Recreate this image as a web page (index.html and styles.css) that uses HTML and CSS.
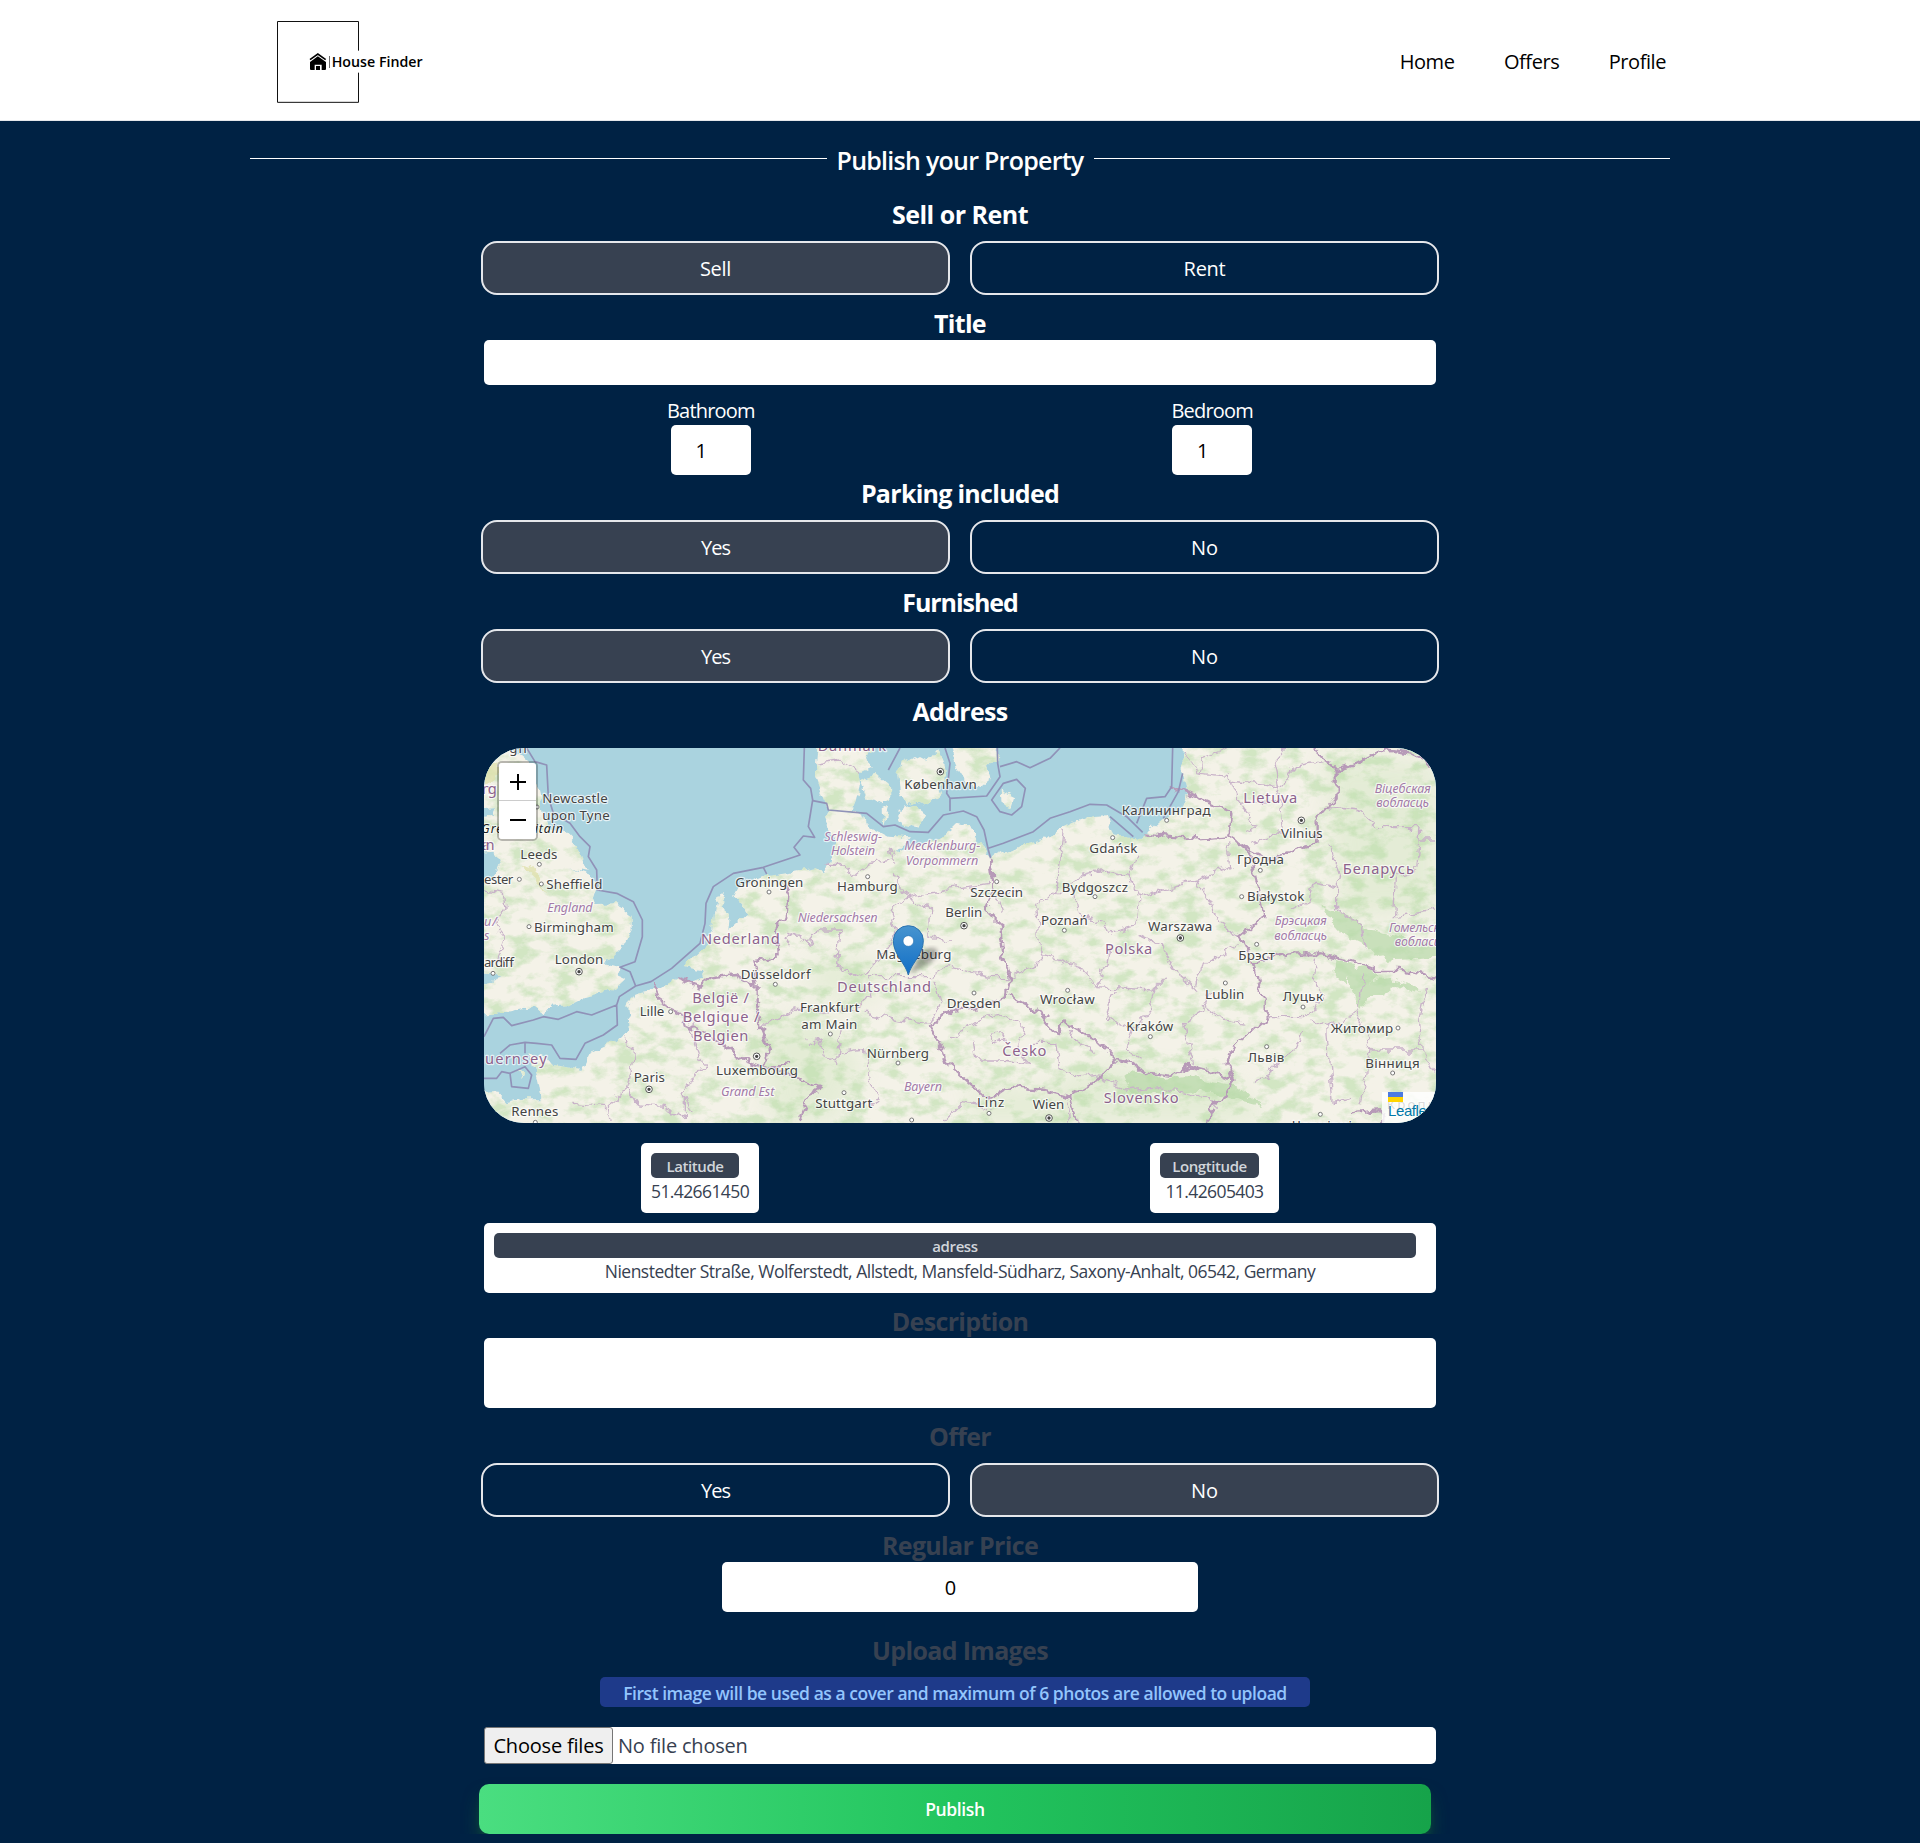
FILE: index.html
```html
<!DOCTYPE html>
<html lang="en">
<head>
<meta charset="utf-8">
<title>House Finder</title>
<link rel="stylesheet" href="styles.css">
</head>
<body>
<header class="site-header">
  <div class="header-inner">
    <svg class="logo" viewBox="0 0 510 315" role="img" aria-label="House Finder">
      <path d="M265.500 122V34.500H22.500V277H265.500V188" fill="none" stroke="#111" stroke-width="3"/>
      <path d="M120 149L143.500 132L167 149" fill="none" stroke="#000" stroke-width="5"/>
      <path fill-rule="evenodd" d="M120 156L143.500 139L168 156V177Q168 180 165 180H155V164H134V180H123Q120 180 120 177ZM138 168H150V180H138Z" fill="#000"/>
      <path d="M178.500 138V174" stroke="#222" stroke-width="2"/>
      <text class="logo-text" x="185" y="172" textLength="273" lengthAdjust="spacingAndGlyphs">House Finder</text>
    </svg>
    <nav class="nav"><a>Home</a><a>Offers</a><a>Profile</a></nav>
  </div>
</header>
<main class="page">
  <h1 class="page-title"><span>Publish your Property</span></h1>
  <form class="form">
    <h2 class="heading sell-or-rent">Sell or Rent</h2>
    <div class="choices"><button type="button" class="choice on">Sell</button><button type="button" class="choice">Rent</button></div>
    <h2 class="heading">Title</h2>
    <div class="field title-field"></div>
    <div class="rooms">
      <label class="room"><span>Bathroom</span><span class="field number">1</span></label>
      <label class="room"><span>Bedroom</span><span class="field number">1</span></label>
    </div>
    <h2 class="heading tight">Parking included</h2>
    <div class="choices"><button type="button" class="choice on yes">Yes</button><button type="button" class="choice no">No</button></div>
    <h2 class="heading furnished">Furnished</h2>
    <div class="choices"><button type="button" class="choice on yes">Yes</button><button type="button" class="choice no">No</button></div>
    <h2 class="heading">Address</h2>
    <div class="map">
      <svg class="map-canvas" viewBox="42 54 2856 1125">
        <defs>
          <filter id="terrain" x="0" y="0" width="2940" height="1200" filterUnits="userSpaceOnUse" color-interpolation-filters="sRGB">
            <feTurbulence type="fractalNoise" baseFrequency="0.03" numOctaves="3" seed="4" result="jag"/>
            <feDisplacementMap in="SourceGraphic" in2="jag" scale="30" xChannelSelector="R" yChannelSelector="G" result="land"/>
            <feTurbulence type="fractalNoise" baseFrequency="0.016 0.026" numOctaves="5" seed="11"/>
            <feColorMatrix values="0 0 0 0 .74  0 0 0 0 .87  0 0 0 0 .68  0 3.600 0 0 -1.600" result="wood"/>
            <feComposite in="wood" in2="land" operator="in" result="forest"/>
            <feComponentTransfer in="forest" result="soft"><feFuncA type="linear" slope=".62"/></feComponentTransfer>
            <feMerge><feMergeNode in="land"/><feMergeNode in="soft"/></feMerge>
          </filter>
          <filter id="jagged" x="0" y="0" width="2940" height="1200" filterUnits="userSpaceOnUse" color-interpolation-filters="sRGB">
            <feTurbulence type="fractalNoise" baseFrequency="0.03" numOctaves="3" seed="4"/>
            <feDisplacementMap in="SourceGraphic" scale="36" xChannelSelector="R" yChannelSelector="G"/>
          </filter>
          <filter id="blur"><feGaussianBlur stdDeviation="6"/></filter>
          <filter id="haze" x="-20%" y="-20%" width="140%" height="140%"><feGaussianBlur stdDeviation="35"/></filter>
          <linearGradient id="pin" x1="0" y1="0" x2="0" y2="1"><stop offset="0" stop-color="#4794cf"/><stop offset="1" stop-color="#126fc6"/></linearGradient>
        </defs>
        <path fill="#aad3df" d="M0 0H2940V1200H0z"/>
        <g filter="url(#terrain)" fill="#f4f2e8">
          <path d="M20 54H125L180 100L205 180L230 290L275 300L320 345L330 380L350 425L300 415L345 430L380 470L370 500L385 522L440 520L485 555V600L455 655L420 690L400 700L450 712L440 735L462 745L425 780L350 800L300 825L240 830L225 850L195 828L110 845L20 852V770L75 755L90 735L20 728V450L75 440L92 400L70 365L20 370V262L78 250L75 235L20 238z"/>
          <path d="M20 1085L75 1080L110 1120L165 1105L215 1105L205 1050L190 1000L175 970L235 985L250 1005L340 1020L365 965L440 930L480 900L472 830L490 795L560 780L620 745L660 760L700 745L690 720L640 710L690 665L730 600L735 550L745 495L765 490L750 530L780 555L775 600L830 550L790 500L805 470L880 440L950 430L1040 415L1065 430L1075 395L1095 330L1065 260L1075 240L1060 200L1035 130L1045 20H1220L1190 90L1205 110L1165 130L1172 170L1160 215L1150 240L1190 265L1195 290L1250 320L1320 325L1275 375L1330 345L1400 330L1440 300L1500 285L1525 330L1560 385L1640 350L1720 330L1760 300L1810 275L1870 255L1910 253L1920 290L1935 320L2000 325L2040 300L2080 265L2130 245L2152 190L2138 130V20H2940V1200H20z"/>
          <path d="M1172 150L1220 133L1257 165L1258 205L1225 225L1190 205zM1295 95L1335 75L1375 95L1405 58L1425 110L1430 150L1400 175L1410 205L1370 225L1345 215L1310 225L1290 190L1285 140zM1282 240L1330 225L1365 250L1350 290L1300 280zM1235 235L1255 225L1240 285zM1440 20H1592L1585 75L1550 115L1562 150L1535 172L1490 158L1460 110zM1592 185L1632 205L1625 230L1595 218zM1440 300L1465 275L1505 285L1500 320L1455 320zM140 1025L165 1030L155 1043z"/>
        </g>
        <g filter="url(#haze)" fill="#b5dba0" opacity=".25">
          <path d="M870 880L1060 850L1180 1000L1100 1179H900zM1500 1060L1700 1080L1900 1000L2300 1060L2400 1179H1500zM2560 80L2898 100V540L2620 560zM1050 680L1250 700L1200 820L1000 780z"/>
        </g>
        <g filter="url(#jagged)" fill="#b7d9a8" opacity=".7">
          <path d="M2630 720L2690 710L2730 735L2700 760L2760 750L2838 770L2850 790L2780 765L2740 790L2700 800L2670 840L2650 800z"/>
          <path d="M1960 1040L1990 1015L2080 1050L2160 1040L2290 1065L2380 1130L2300 1110L2200 1080L2080 1090L1980 1090z"/>
          <path d="M2560 530L2640 560L2700 600L2898 640V680L2740 690L2680 640L2600 600zM2600 690L2650 700L2630 760L2590 730z"/>
          <path fill="#dfe0a8" d="M42 110L90 100L80 150L42 160zM150 400L200 420L230 500L190 440z"/>
        </g>
        <g class="regions" filter="url(#jagged)">
          <path d="M42 480L100 490L105 540L70 580L105 620L80 690L130 700"/>
          <path d="M465 920L490 960L485 1020L470 1075L500 1120L580 1130L640 1160L640 1090L700 1000L660 900L680 860"/>
          <path d="M470 1080L415 1120L420 1179M310 1120L410 1130M500 1120L470 1075M640 1100L660 1150"/>
          <path d="M1040 100L1105 90L1165 130M1110 400L1150 440L1200 400L1270 390L1260 350M1270 430L1310 500L1385 540L1380 620L1440 640M1260 540L1310 500L1420 480L1560 460M1260 540L1280 600L1250 660L1200 720L1160 740L1100 700L1110 600L1050 600L1020 640L960 610L950 640"/>
          <path d="M1000 830L890 880M860 900L980 830L1060 850M1060 850L1180 830L1200 800L1190 740L1380 740L1440 710L1560 740L1620 740M1190 850L1290 870L1380 880L1410 820L1390 750M1110 900L1100 1000L1060 980L1050 930L1010 940M1110 970L1180 960L1200 1060L1230 1110L1170 1130M1070 400L1110 400"/>
          <path d="M1700 520L1760 490L1780 300M1700 520L1705 620L1720 680L1680 720L1620 740M1760 490L1830 440L1900 420L1980 440L2000 380M1980 440L2010 500L2000 590L1920 610L1900 580L1820 550L1810 480M2010 500L2180 450L2280 410L2270 340M2180 450L2230 540L2260 590L2310 620M2000 610L2080 650L2110 720L2180 780L2200 700L2300 650M1720 680L1830 710L1880 770L2050 780L2090 740M1930 780L1910 860L1990 900L2040 840L2060 770M1990 900L1970 950L2020 990M2140 880L2200 840L2220 780M2200 820L2260 870L2330 880M2140 880L2170 1000M1920 650L1910 700L1880 770M1600 540L1580 500L1650 480"/>
          <path d="M2140 60L2190 130L2280 140L2310 220L2430 210L2410 100L2450 54M2190 130L2200 80L2270 54M2280 150L2440 170L2470 110L2580 90M2310 220L2360 290L2330 310M2430 210L2440 300L2350 340M2580 230L2660 240L2720 290L2850 290L2840 420L2780 440L2770 560L2898 540M2580 350L2610 430L2600 470L2530 460L2520 510L2460 540M2600 470L2600 540L2680 590L2690 660M2850 330L2898 330"/>
          <path d="M2540 680L2530 740L2560 790L2540 830L2500 860L2400 860L2380 880M2680 730L2660 850L2570 890L2520 870M2660 850L2700 960L2860 960L2850 860L2870 780M2500 900L2480 950L2410 1010L2390 1050L2360 1060M2570 890L2580 1030L2590 1120L2640 1110M2700 960L2690 1030L2670 1120M2860 960L2898 1030"/>
          <path d="M1440 930L1530 870L1600 850L1660 900L1640 960L1680 1000L1600 990L1520 990L1510 930M1680 940L1760 940L1770 1010L1830 1040L1900 1030M1800 900L1830 950L1880 970M1560 920L1590 910L1600 930L1570 940z"/>
          <path d="M1420 1179L1480 1120L1560 1140M1790 1110L1800 1179M1880 1040L1970 1080L2070 1070L2200 1100L2240 1130"/>
        </g>
        <g class="borders" filter="url(#jagged)">
          <path d="M545 755L570 820L640 850L650 890L720 920L790 970L830 995L880 1010L900 960L870 880L860 820L860 770L800 735L720 745L690 770L620 745M860 770L850 690L920 680L915 590L950 560L955 490L940 460M880 1010L980 1040L1045 1065L1010 1120L985 1179M870 890L890 940M830 995L900 1020L960 1000"/>
          <path d="M1560 390L1570 460L1550 540L1590 580L1600 680L1620 740L1610 800L1540 830L1440 840L1380 890L1410 940L1430 1000L1500 1060L1560 1110L1620 1070L1720 1080L1800 1100L1880 1050L1940 990L1880 930L1790 880L1760 910L1700 840L1620 800"/>
          <path d="M1940 990L1990 1000L2030 1030L2100 1040L2160 1005L2220 1020L2290 1050L2270 1000L2300 940L2390 870L2390 810L2360 750L2350 700L2310 620L2380 560L2370 500L2340 370L2280 320L2180 325L2020 310"/>
          <path d="M2280 320L2290 250L2230 225L2100 170M2280 320L2340 360L2400 390L2450 370L2500 350L2540 340L2540 270L2600 200L2600 120L2660 100L2740 60L2820 70L2898 110M2530 50L2600 120"/>
          <path d="M2350 700L2450 670L2540 670L2640 690L2720 720L2790 720L2898 740M2290 1050L2270 1100L2230 1120L2210 1179M1800 1100L1820 1179M2640 1150L2740 1140L2740 1179"/>
        </g>
        <g class="sea-lines">
          <path d="M170 54L195 95L230 105L235 200L250 250L300 280L330 320L360 350L355 380L380 420L382 480L440 490L490 515L517 570V620L495 695L450 712L480 725L497 768L543 755L605 715L690 640L705 580L708 520L730 470L790 430L880 412L990 375L972 352L1000 318L1034 322L1015 290L1028 210L1022 175L1000 150L1003 54"/>
          <path d="M42 920L70 865L100 862L125 887L190 870L220 860L265 868L320 845L365 855L440 825L448 800L497 768M440 825L442 885L400 915L345 940L318 988L270 985L245 945L200 940L165 937L120 945L90 970M165 937V970M42 1045H80L95 1025L120 1030L165 1010L185 1035L175 1075L125 1070L120 1030"/>
          <path d="M1028 212L1070 220L1075 240L1190 250L1240 290L1275 285L1320 305L1375 307L1420 255L1480 243L1520 260L1542 300L1555 360L1562 385M880 412L890 432M1425 54L1440 100L1430 190L1440 205L1550 198L1590 140L1583 100L1582 54M1590 110L1640 95L1680 113L1740 85L1770 54M1440 205L1440 243M1565 210L1600 160L1640 148L1666 175L1655 230L1625 255L1590 245zM1555 355L1600 340L1690 305L1740 265L1800 245L1860 223L1910 225L1970 260L2018 307M2000 280L2030 205L2085 200L2105 170L2108 54M1255 120L1290 54"/>
          <path d="M1920 260L1990 320M2138 130L2125 185L2080 265" stroke-width="2"/>
        </g>
        <g class="cities">
          <text x="118" y="70" textLength="52">gh</text>
          <text x="217" y="219" textLength="196">Newcastle</text><text x="217" y="270" textLength="202">upon Tyne</text>
          <text x="151" y="387" textLength="111">Leeds</text><text x="42" y="462" textLength="88">ester</text>
          <text x="229" y="478" textLength="168">Sheffield</text><text x="192" y="606" textLength="239">Birmingham</text>
          <text x="254" y="702" textLength="146">London</text><text x="42" y="712" textLength="90">ardiff</text>
          <text x="796" y="471" textLength="204">Groningen</text><text x="1101" y="484" textLength="182">Hamburg</text>
          <text x="1303" y="177" textLength="217">København</text><text x="1426" y="562" textLength="111">Berlin</text>
          <text x="1219" y="686" textLength="225">Magdeburg</text><text x="812" y="748" textLength="210">Düsseldorf</text>
          <text x="509" y="858" textLength="74">Lille</text><text x="990" y="847" textLength="178">Frankfurt</text><text x="994" y="898" textLength="168">am Main</text>
          <text x="1430" y="833" textLength="162">Dresden</text><text x="1190" y="985" textLength="187">Nürnberg</text>
          <text x="738" y="1034" textLength="246">Luxembourg</text><text x="491" y="1055" textLength="94">Paris</text>
          <text x="1036" y="1134" textLength="171">Stuttgart</text><text x="124" y="1158" textLength="141">Rennes</text>
          <text x="1955" y="254" textLength="267">Калининград</text><text x="2433" y="323" textLength="125">Vilnius</text>
          <text x="1858" y="368" textLength="144">Gdańsk</text><text x="2301" y="403" textLength="141">Гродна</text>
          <text x="1775" y="485" textLength="199">Bydgoszcz</text><text x="2331" y="513" textLength="172">Białystok</text>
          <text x="1501" y="501" textLength="158">Szczecin</text><text x="1713" y="584" textLength="140">Poznań</text>
          <text x="2034" y="602" textLength="193">Warszawa</text><text x="2305" y="690" textLength="109">Брэст</text>
          <text x="1710" y="822" textLength="164">Wrocław</text><text x="2205" y="806" textLength="118">Lublin</text>
          <text x="2438" y="814" textLength="121">Луцьк</text><text x="1969" y="904" textLength="141">Kraków</text>
          <text x="2333" y="995" textLength="110">Львів</text><text x="2582" y="908" textLength="187">Житомир</text>
          <text x="2686" y="1014" textLength="163">Вінниця</text><text x="1521" y="1132" textLength="82">Linz</text>
          <text x="1688" y="1138" textLength="95">Wien</text><text x="2466" y="1201" textLength="180">Чернівці</text>
          <text x="2750" y="1138" textLength="240">Кропивни</text>
          <text class="gb" x="34" y="310" textLength="245">Great Britain</text>
        </g>
        <g class="countries">
          <text x="1043" y="63" textLength="205">Danmark</text><text x="36" y="192" textLength="44">ng</text><text x="36" y="360" textLength="38">an</text>
          <text x="693" y="641" textLength="236">Nederland</text><text x="1101" y="787" textLength="282">Deutschland</text>
          <text x="667" y="820" textLength="170">België /</text><text x="638" y="876" textLength="230">Belgique /</text><text x="669" y="932" textLength="166">Belgien</text>
          <text x="10" y="1002" textLength="220">Guernsey</text><text x="2320" y="218" textLength="162">Lietuva</text>
          <text x="2618" y="432" textLength="214">Беларусь</text><text x="1905" y="671" textLength="142">Polska</text>
          <text x="1597" y="977" textLength="132">Česko</text><text x="1901" y="1120" textLength="225">Slovensko</text>
        </g>
        <g class="states">
          <text x="232" y="545" textLength="136">England</text><text x="42" y="588" textLength="38">u /</text><text x="42" y="630" textLength="18">s</text>
          <text x="1063" y="332" textLength="173">Schleswig-</text><text x="1083" y="376" textLength="132">Holstein</text>
          <text x="1303" y="360" textLength="228">Mecklenburg-</text><text x="1307" y="404" textLength="218">Vorpommern</text>
          <text x="983" y="577" textLength="240">Niedersachsen</text><text x="753" y="1099" textLength="160">Grand Est</text><text x="1302" y="1082" textLength="114">Bayern</text>
          <text x="2714" y="188" textLength="168">Віцебская</text><text x="2719" y="232" textLength="158">вобласць</text>
          <text x="2414" y="586" textLength="156">Брэсцкая</text><text x="2413" y="630" textLength="158">вобласць</text>
          <text x="2757" y="605" textLength="190">Гомельская</text><text x="2774" y="648" textLength="158">вобласць</text>
        </g>
        <g class="dots">
          <circle cx="208" cy="403" r="6"/><circle cx="148" cy="448" r="6"/><circle cx="214" cy="462" r="6"/><circle cx="177" cy="590" r="6"/><circle cx="69" cy="730" r="6"/><circle cx="201" cy="231" r="6"/>
          <circle cx="897" cy="486" r="6"/><circle cx="1193" cy="440" r="6"/><circle cx="916" cy="763" r="6"/><circle cx="602" cy="845" r="6"/><circle cx="1081" cy="912" r="6"/><circle cx="1284" cy="999" r="6"/><circle cx="1122" cy="1088" r="6"/><circle cx="196" cy="1177" r="6"/><circle cx="1325" cy="1170" r="6"/>
          <circle cx="2090" cy="271" r="6"/><circle cx="1928" cy="323" r="6"/><circle cx="2371" cy="421" r="6"/><circle cx="1580" cy="455" r="6"/><circle cx="1875" cy="500" r="6"/><circle cx="2315" cy="500" r="6"/><circle cx="1783" cy="601" r="6"/><circle cx="2360" cy="643" r="6"/><circle cx="2266" cy="759" r="6"/><circle cx="1793" cy="781" r="6"/><circle cx="1512" cy="789" r="6"/><circle cx="2499" cy="831" r="6"/><circle cx="2041" cy="920" r="6"/><circle cx="2390" cy="950" r="6"/><circle cx="2784" cy="894" r="6"/><circle cx="2768" cy="1029" r="6"/><circle cx="1557" cy="1150" r="6"/><circle cx="2551" cy="1153" r="6"/>
        </g>
        <g class="capitals">
          <circle cx="327" cy="725" r="10"/><circle cx="537" cy="1078" r="10"/><circle cx="860" cy="979" r="10"/><circle cx="1411" cy="125" r="10"/><circle cx="1482" cy="587" r="10"/><circle cx="2494" cy="271" r="10"/><circle cx="2131" cy="624" r="10"/><circle cx="1737" cy="1164" r="10"/>
          <path d="M327 725h.1M537 1078h.1M860 979h.1M1411 125h.1M1482 587h.1M2494 271h.1M2131 624h.1M1737 1164h.1"/>
        </g>
        <path d="M1318 733L1352 668Q1385 645 1400 658Q1410 675 1380 700z" fill="#000" opacity=".3" filter="url(#blur)"/>
        <path d="M1315 735C1308 702 1270 674 1270 632A45 45 0 0 1 1360 632C1360 674 1322 702 1315 735Z" fill="url(#pin)" stroke="#2b72b0" stroke-width="3"/>
        <circle cx="1315" cy="633" r="16" fill="#fff" stroke="#2d75b4" stroke-width="2"/>
      </svg>
      <div class="zoom">
        <button type="button" class="zoom-btn" aria-label="Zoom in"><svg viewBox="0 0 16 16" width="16" height="16"><path d="M0 8H16M8 0V16" stroke="#000" stroke-width="2"/></svg></button>
        <button type="button" class="zoom-btn" aria-label="Zoom out"><svg viewBox="0 0 16 16" width="16" height="16"><path d="M0 8H16" stroke="#000" stroke-width="2"/></svg></button>
      </div>
      <div class="attribution"><span class="flag"></span>Leaflet</div>
    </div>
    <div class="coords">
      <div class="card lat"><div class="tag">Latitude</div><div class="value">51.42661450</div></div>
      <div class="card lng"><div class="tag">Longtitude</div><div class="value">11.42605403</div></div>
    </div>
    <div class="card address"><div class="tag">adress</div><div class="value">Nienstedter Straße, Wolferstedt, Allstedt, Mansfeld-Südharz, Saxony-Anhalt, 06542, Germany</div></div>
    <h2 class="heading dim">Description</h2>
    <div class="field description"></div>
    <h2 class="heading dim">Offer</h2>
    <div class="choices"><button type="button" class="choice yes">Yes</button><button type="button" class="choice on no">No</button></div>
    <h2 class="heading dim">Regular Price</h2>
    <div class="field price">0</div>
    <h2 class="heading dim spaced">Upload Images</h2>
    <p class="notice">First image will be used as a cover and maximum of 6 photos are allowed to upload</p>
    <div class="field files"><button type="button" class="pick">Choose files</button><span class="picked">No file chosen</span></div>
    <button type="button" class="publish">Publish</button>
  </form>
</main>
</body>
</html>
```
FILE: styles.css
```css
* { box-sizing: border-box; margin: 0; padding: 0; }
body { background: #002244; font-family: "Open Sans", "Noto Sans", sans-serif; font-size: 20px; line-height: 30px; color: #fff; }
button { font: inherit; color: inherit; letter-spacing: inherit; }
.site-header { height: 121px; background: #fff; border-bottom: 1px solid #e5e7eb; }
.header-inner { width: 1420px; height: 120px; margin: 0 auto; padding: 10px 4px 5px 20px; display: flex; justify-content: space-between; align-items: center; }
.logo { width: 170px; height: 105px; flex: none; }
.logo-text { font: 600 42px "Open Sans", sans-serif; fill: #000; }
.nav { display: flex; gap: 49.5px; color: #000; padding-bottom: 2px; letter-spacing: -.44px; }
.page { width: 1420px; margin: 0 auto; padding-top: 20px; }
.page-title { height: 35px; display: flex; align-items: center; gap: 10px; font-size: 25px; line-height: 38px; font-weight: 600; letter-spacing: -.74px; white-space: nowrap; }
.page-title::before, .page-title::after { content: ""; flex: 1; height: 1px; background: #fff; }
.form { width: 952px; margin: 20px auto 0; display: flex; flex-direction: column; }
.page-title span { padding-top: 2px; }
.heading { height: 35px; margin-top: 10px; font-size: 25px; line-height: 37px; font-weight: 700; letter-spacing: -.72px; text-align: center; white-space: nowrap; }
.heading.sell-or-rent { margin-top: 0; letter-spacing: -.5px; }
.heading.tight { margin-top: 0; }
.heading.furnished { letter-spacing: -1.05px; }
.heading.spaced { margin-top: 20px; }
.heading.dim { color: #374151; letter-spacing: -.66px; }
.choices { display: flex; gap: 20px; margin: 10px -3px 0; letter-spacing: -.3px; }
.choice { flex: 1; height: 54px; padding-top: 2px; border: 2px solid #e5e7eb; border-radius: 16px; background: transparent; }
.choice.on { background: #374151; }
.choice.yes { letter-spacing: -1px; }
.choice.no { letter-spacing: 0; }
.field { background: #fff; border-radius: 5px; color: #000; }
.title-field { height: 45px; }
.rooms { display: flex; justify-content: space-between; margin-top: 10px; padding: 0 183px; letter-spacing: -.8px; line-height: 32px; }
.room { height: 80px; display: flex; flex-direction: column; align-items: center; }
.number { width: 80px; height: 50px; margin-top: -2px; line-height: 52px; text-align: center; padding-right: 20px; }
.map { position: relative; height: 375px; margin-top: 20px; border-radius: 40px; overflow: hidden; background: #aad3df; }
.map-canvas { display: block; width: 952px; height: 375px; font-family: "Noto Sans", sans-serif; }
.map-canvas text { paint-order: stroke; stroke: rgba(255, 255, 255, .7); stroke-width: 7px; stroke-linejoin: round; }
.regions path { fill: none; stroke: #c9b3c9; stroke-width: 4; }
.borders path { fill: none; stroke: #b79ab8; stroke-width: 7; stroke-linejoin: round; }
.sea-lines path { fill: none; stroke: #9092b8; stroke-width: 5; stroke-linejoin: round; }
.cities { font-size: 40px; fill: #444; }
.cities .gb { font-style: italic; font-size: 37px; fill: #222; }
.countries { font-size: 44px; fill: #8c628c; }
.states { font-size: 38px; font-style: italic; fill: #a37ba8; }
.dots circle { fill: #fff; stroke: #777; stroke-width: 3; }
.capitals circle { fill: #fff; stroke: #555; stroke-width: 3; }
.capitals path { stroke: #444; stroke-width: 10; stroke-linecap: round; }
.zoom { position: absolute; left: 13px; top: 13px; width: 41px; border: 2px solid rgba(0, 0, 0, .25); border-radius: 5px; background-clip: padding-box; overflow: hidden; }
.zoom-btn { display: flex; width: 37px; height: 38px; align-items: center; justify-content: center; background: #fff; border: 0; }
.zoom-btn:first-child { border-bottom: 1px solid #ccc; }
.attribution { position: absolute; left: 898px; top: 344px; width: 54px; height: 31px; padding-left: 6px; background: rgba(255, 255, 255, .8); color: #0078a8; font: 15px/18px "Liberation Sans", sans-serif; letter-spacing: -.4px; }
.flag { display: block; width: 15px; height: 10px; background: linear-gradient(#4c7be1 50%, #ffd500 50%); }
.coords { display: flex; justify-content: space-between; margin-top: 20px; padding: 0 157px; }
.card { height: 70px; padding: 10px; background: #fff; border-radius: 5px; color: #374151; text-align: center; white-space: nowrap; }
.lat { width: 118px; }
.lng { width: 129px; }
.address { margin-top: 10px; }
.tag { height: 25px; margin-right: 10px; background: #374151; border-radius: 5px; color: #d1d5db; font-size: 15px; line-height: 26px; font-weight: 600; letter-spacing: -.4px; }
.value { font-size: 17.5px; line-height: 27px; letter-spacing: -.6px; }
.address .value { letter-spacing: -.5px; }
.description { height: 70px; }
.price { width: 476px; height: 50px; margin: 0 auto; line-height: 52px; text-align: center; padding-right: 19px; }
.notice { width: 710px; height: 30px; margin: 10px 0 0 116px; background: #1e3a8a; border-radius: 5px; color: #93c5fd; font-size: 17.5px; line-height: 32px; font-weight: 600; letter-spacing: -.46px; text-align: center; white-space: nowrap; }
.files { height: 37px; margin-top: 20px; display: flex; font-weight: 500; letter-spacing: -.2px; color: #374151; }
.pick { width: 129px; height: 37px; border: 1px solid #767676; border-radius: 3px; background: #efefef; color: #000; white-space: nowrap; }
.picked { margin-left: 5px; line-height: 38px; }
.publish { width: 952px; height: 50px; margin: 20px 0 0 -5px; border: 0; border-radius: 10px; background: linear-gradient(to right, #4ade80, #22c55e, #16a34a); box-shadow: 0 12px 19px -4px rgba(22, 101, 52, .8), 0 5px 8px -5px rgba(22, 101, 52, .8); font-size: 17.5px; font-weight: 600; letter-spacing: -.38px; }
```
